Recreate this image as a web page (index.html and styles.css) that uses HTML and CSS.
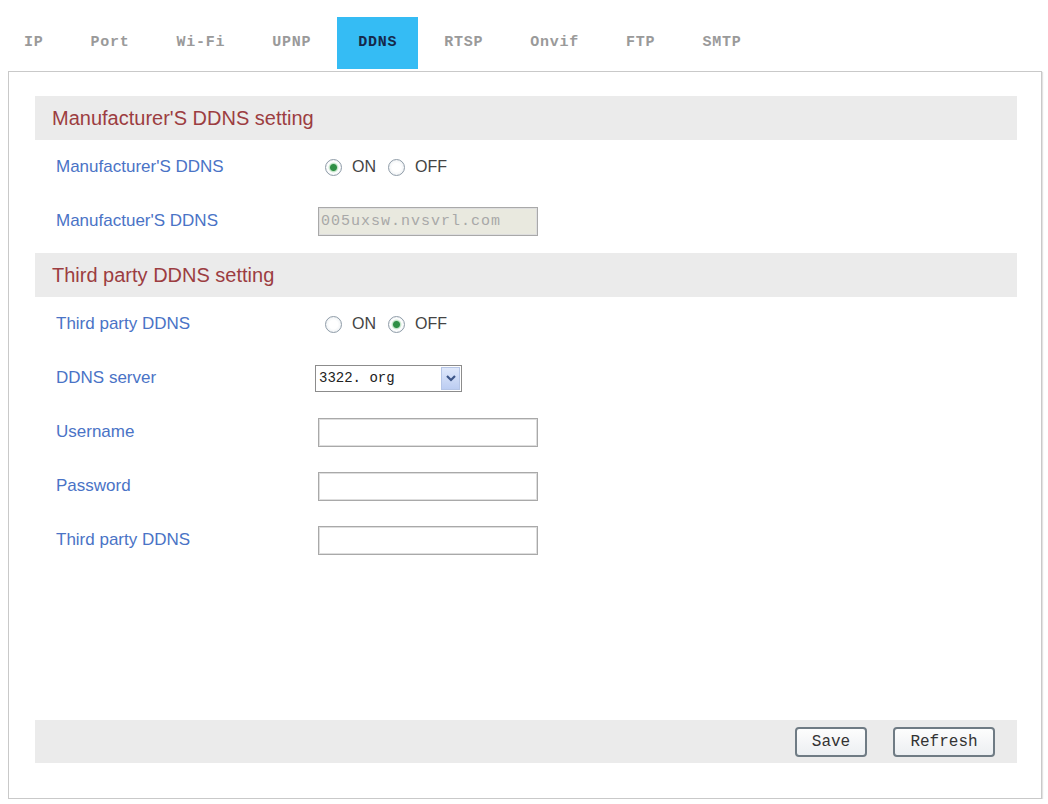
FILE: index.html
```html
<!DOCTYPE html>
<html lang="en">
  <head>
    <meta charset="UTF-8" />
    <meta name="viewport" content="width=device-width, initial-scale=1.0" />
    <title>DDNS</title>
    <link rel="stylesheet" href="styles.css">
  </head>
  <body>
    <div class="page">
      <ul class="tabs">
        <li>IP</li>
        <li>Port</li>
        <li>Wi-Fi</li>
        <li>UPNP</li>
        <li class="active">DDNS</li>
        <li>RTSP</li>
        <li>Onvif</li>
        <li>FTP</li>
        <li>SMTP</li>
      </ul>

      <form class="panel">
        <div class="section-title">Manufacturer'S DDNS setting</div>
        <div class="row">
          <span class="label">Manufacturer'S DDNS</span>
          <div class="field">
            <label class="radio"><input type="radio" name="mfr" checked /> ON</label>
            <label class="radio"><input type="radio" name="mfr" /> OFF</label>
          </div>
        </div>
        <div class="row">
          <span class="label">Manufactuer'S DDNS</span>
          <div class="field">
            <input class="text" type="text" value="005uxsw.nvsvrl.com" disabled />
          </div>
        </div>

        <div class="section-title">Third party DDNS setting</div>
        <div class="row">
          <span class="label">Third party DDNS</span>
          <div class="field">
            <label class="radio"><input type="radio" name="third" /> ON</label>
            <label class="radio"><input type="radio" name="third" checked /> OFF</label>
          </div>
        </div>
        <div class="row">
          <span class="label">DDNS server</span>
          <div class="field">
            <div class="select">
              <span class="select-value">3322. org</span>
              <span class="select-arrow">
                <svg width="12" height="8" viewBox="0 0 12 8">
                  <path d="M2 2 L6 6 L10 2" fill="none" stroke="#3d5688" stroke-width="2.2" />
                </svg>
              </span>
            </div>
          </div>
        </div>
        <div class="row">
          <span class="label">Username</span>
          <div class="field"><input class="text" type="text" /></div>
        </div>
        <div class="row">
          <span class="label">Password</span>
          <div class="field"><input class="text" type="password" /></div>
        </div>
        <div class="row">
          <span class="label">Third party DDNS</span>
          <div class="field"><input class="text" type="text" /></div>
        </div>

        <div class="actions">
          <button type="button" class="btn save">Save</button>
          <button type="button" class="btn refresh">Refresh</button>
        </div>
      </form>
    </div>
  </body>
</html>
```

FILE: styles.css
```css
body {
  margin: 0;
  background-color: #fff;
  font-family: Arial, "Liberation Sans", sans-serif;
}
.page {
  padding: 17px 6px 0 0;
}
.tabs {
  display: flex;
  gap: 5px;
  margin: 0 0 2px;
  padding: 0 0 0 3px;
  list-style: none;
}
.tabs li {
  height: 52px;
  line-height: 52px;
  padding: 0 21px;
  font-family: "Liberation Mono", monospace;
  font-size: 15px;
  font-weight: bold;
  letter-spacing: 0.75px;
  color: #9a9a9a;
}
.tabs li.active {
  background-color: #35bcf4;
  color: #16294a;
}
.panel {
  box-sizing: border-box;
  display: flex;
  flex-direction: column;
  width: 1034px;
  height: 728px;
  margin: 0 0 0 8px;
  padding: 19px 24px 35px 26px;
  border: 1px solid #c9c9c9;
  box-shadow: 1px 1px 1px #e2e2e2;
}
.section-title {
  margin-top: 5px;
  height: 44px;
  line-height: 44px;
  padding-left: 17px;
  background-color: #ebebeb;
  color: #9c3d41;
  font-size: 20px;
}
.row {
  display: flex;
  align-items: center;
  height: 54px;
  padding-left: 21px;
}
.label {
  width: 262px;
  color: #4a73c6;
  font-size: 17px;
}
.field {
  display: flex;
  align-items: center;
}
.radio {
  display: flex;
  align-items: center;
  color: #444;
  font-size: 16px;
  margin-left: 12px;
}
.radio:first-child {
  margin-left: 7px;
}
.radio input {
  appearance: none;
  width: 17px;
  height: 17px;
  margin: 0 10px 0 0;
  border: 1px solid #8f9ca8;
  border-radius: 50%;
  background: radial-gradient(circle, #ffffff 40%, #e3e8ec 100%);
}
.radio input:checked {
  background: radial-gradient(circle, #2f8f45 0 3px, #bfe3c5 4px, #ffffff 5.5px, #e3e8ec 100%);
}
.text {
  box-sizing: border-box;
  width: 220px;
  height: 29px;
  padding: 0 2px;
  border: 1px solid #a9a9a9;
  box-shadow: inset 0 0 0 1px #dedede;
  background-color: #fff;
  font-family: "Liberation Mono", monospace;
  font-size: 15px;
  letter-spacing: 1px;
}
.text:disabled {
  background-color: #e9e9df;
  color: #a8a8a8;
}
.select {
  box-sizing: border-box;
  display: flex;
  align-items: center;
  justify-content: space-between;
  width: 147px;
  height: 27px;
  margin-left: -3px;
  padding: 1px;
  border: 1px solid #8c8c8c;
  background-color: #fff;
}
.select-value {
  padding-left: 2px;
  font-family: "Liberation Mono", monospace;
  font-size: 14px;
  color: #222;
}
.select-arrow {
  display: flex;
  align-items: center;
  justify-content: center;
  width: 19px;
  height: 23px;
  background: linear-gradient(#dfe8fb, #bccdf2);
  border: 1px solid #b5c5e6;
  box-sizing: border-box;
}
.actions {
  display: flex;
  align-items: center;
  justify-content: flex-end;
  gap: 26px;
  margin-top: auto;
  height: 43px;
  padding-right: 22px;
  background-color: #ebebeb;
}
.btn {
  height: 30px;
  border: 2px solid #6f7b84;
  border-radius: 4px;
  background: linear-gradient(#fdfdfd, #eceff2);
  color: #333;
  font-family: "Liberation Mono", monospace;
  font-size: 16px;
  cursor: pointer;
}
.save {
  width: 72px;
}
.refresh {
  width: 102px;
}
```
